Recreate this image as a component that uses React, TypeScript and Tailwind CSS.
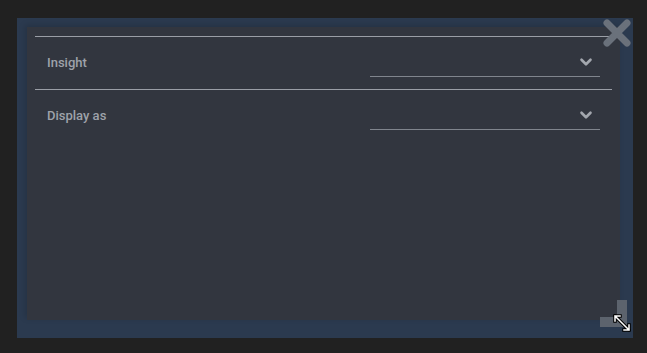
import { ChevronDown } from "lucide-react";

function SelectRow({ label }: { label: string }) {
  return (
    <div className="flex h-[53px] items-start border-t border-[#9a9ea6] pl-[12px] pr-[12px]">
      <span className="mt-[16px] text-[13px] font-medium text-[#9ea2aa]">{label}</span>
      <div className="ml-auto flex h-[40px] w-[230px] items-center justify-end border-b border-[#80858d] pr-[5px]">
        <ChevronDown className="mt-[10px] h-[18px] w-[18px] text-[#a3a7ae]" strokeWidth={3.5} />
      </div>
    </div>
  );
}

export default function App() {
  return (
    <div className="h-[353px] w-[647px] bg-[#212121] pl-[17px] pt-[18px]" style={{ fontFamily: "Roboto, 'Liberation Sans', sans-serif" }}>
      <div className="relative h-[320px] w-[616px] bg-[#2b3a4f] pb-[18px] pl-[10px] pr-[13px] pt-[9px]">
        <div className="h-full w-full bg-[#32363f] px-[8px] pt-[9px] shadow-[-2px_-2px_6px_rgba(0,0,0,0.15)]">
          <SelectRow label="Insight" />
          <SelectRow label="Display as" />
        </div>

        {/* close button */}
        <svg className="absolute right-[1px] top-[0px]" width="30" height="30" viewBox="0 0 30 30">
          <path d="M5 5 L25 25 M25 5 L5 25" stroke="#6a717b" strokeWidth="7" strokeLinecap="round" />
        </svg>

        {/* resize handle */}
        <div className="absolute bottom-[11px] right-[6px] h-[27px] w-[10px] bg-[#5c636d]" />
        <div className="absolute bottom-[11px] right-[6px] h-[10px] w-[27px] bg-[#5c636d]" />
        <svg className="absolute bottom-[6px] right-[2px]" width="18" height="18" viewBox="0 0 18 18">
          <path d="M2 2 L16 16 M2 2 L2 7 M2 2 L7 2 M16 16 L16 11 M16 16 L11 16" stroke="#000" strokeWidth="3.5" strokeLinecap="square" />
          <path d="M2 2 L16 16 M2 2 L2 7 M2 2 L7 2 M16 16 L16 11 M16 16 L11 16" stroke="#fff" strokeWidth="1.5" strokeLinecap="square" />
        </svg>
      </div>
    </div>
  );
}
